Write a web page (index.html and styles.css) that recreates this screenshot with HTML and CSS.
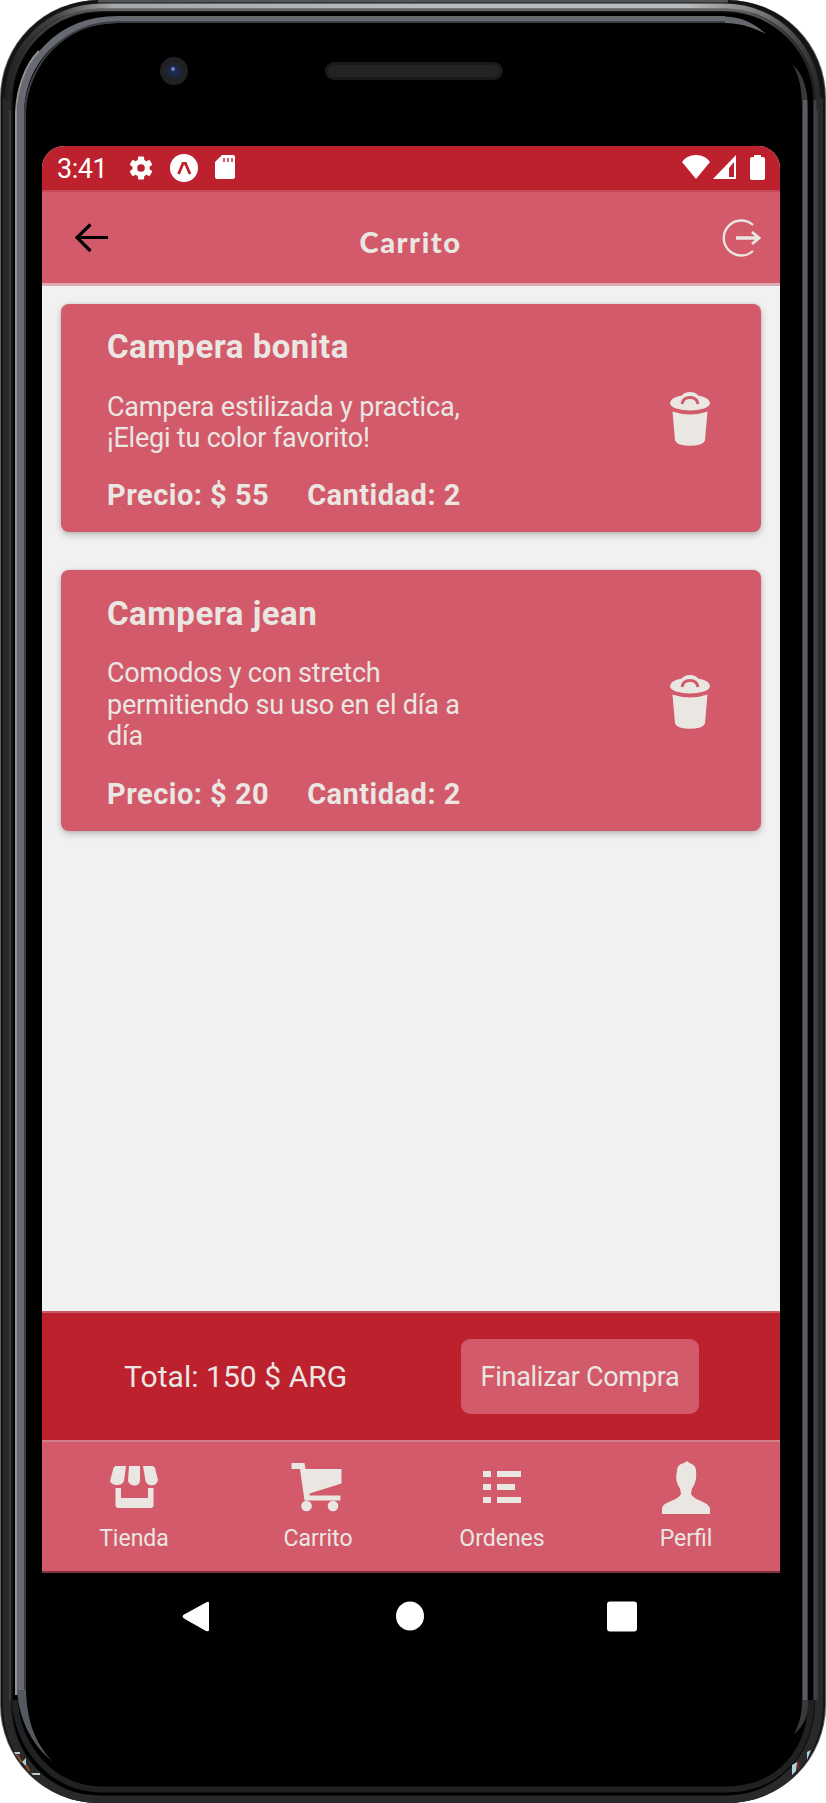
FILE: index.html
```html
<!DOCTYPE html>
<html lang="es">
<head>
<meta charset="utf-8">
<title>Carrito</title>
<link rel="stylesheet" href="styles.css">
</head>
<body>
<div class="phone">
  <svg class="frame" viewBox="0 0 826 1803" aria-hidden="true">
    <defs>
      <linearGradient id="rim" x1="0" y1="0" x2="1" y2="0">
        <stop offset="0" stop-color="#222"/><stop offset=".06" stop-color="#444"/><stop offset=".13" stop-color="#a5a8aa"/><stop offset=".5" stop-color="#b9bcbe"/>
        <stop offset=".84" stop-color="#b9bcbe"/><stop offset=".93" stop-color="#777"/><stop offset="1" stop-color="#292929"/>
      </linearGradient>
      <linearGradient id="rim2" x1="0" y1="0" x2="1" y2="0">
        <stop offset="0" stop-color="#292929"/><stop offset=".12" stop-color="#777b7e"/><stop offset=".9" stop-color="#777b7e"/><stop offset="1" stop-color="#222"/>
      </linearGradient>
    </defs>
    <rect x="0" y="0" width="826" height="1803" rx="98" fill="#606060"/>
    <rect x="1" y="0" width="824" height="1803" rx="98" fill="#141414"/>
    <path d="M98 1H728" stroke="#555" stroke-width="3" fill="none"/>
    <path d="M7 98V1705C7 1755 45 1799 98 1799H728C781 1799 819 1755 819 1705V98" fill="none" stroke="#292929" stroke-width="8"/>
    <path d="M10 110V1700M817 110V1700" stroke="#3b3b3b" stroke-width="2" fill="none"/>
    <path d="M7 100C8 46 48 6 103 6H723C777 6 817 48 818 98" fill="none" stroke="url(#rim)" stroke-width="5"/>
    <path d="M10 102C11 49 52 9.500 104 9.500H723C773 9.500 813 50 814 99" fill="none" stroke="url(#rim2)" stroke-opacity=".8" stroke-width="3"/>
    <rect x="13" y="12.500" width="800" height="1783" rx="87" fill="#000"/>
    <path d="M100 1789.500H726C779 1789 811 1752 811 1700M100 1789.500C51 1788 17 1746 15 1700" fill="none" stroke="#202122" stroke-width="6"/>
    <path d="M20.500 1695V112C22 61 60 19.500 118 19.500H725" fill="none" stroke="#676a72" stroke-width="7"/>
    <path d="M25 1695V112C27 65 64 22 118 22H725" fill="none" stroke="#3c3e44" stroke-width="2"/>
    <path d="M16 1695V112C17 89 25 65 39 51" fill="none" stroke="#929293" stroke-width="2"/>
    <path d="M120 17H725" stroke="#666" stroke-width="1"/>
    <path d="M17 1690H26C27 1720 34 1742 53 1762C30 1743 19 1718 17 1690Z" fill="#55585e"/>
    <path d="M725 16.500C743 17 755 24 766 34C752 27 739 23 725 23Z" fill="#64676e"/>
    <path d="M793 65C804 75 808 91 808 110V1705C808 1718 802 1728 794 1734C800 1723 802 1712 802 1700V110C802 91 800 78 793 65Z" fill="#37393c"/>
    <path d="M805 100V1700" stroke="#5a5c61" stroke-width="4"/>
    <path d="M815 100V1700" stroke="#404040" stroke-width="3"/>
    <path d="M14 1752h6v2h-4l4 7zM22 1762l4-4v6l4 7zM31 1773h9v2h-7z" fill="#b9cbd0"/>
    <path d="M18 1755l3 7M26 1765l3 6" stroke="#994719" stroke-width="2"/>
    <path d="M807 1752l4-2-4 10zM792 1765l5-3-1 9-4 4z" fill="#acd6de"/>
    <path d="M798 1762v7" stroke="#862425" stroke-width="2"/>
    <circle cx="174" cy="71" r="14" fill="#202124"/>
    <circle cx="174" cy="71" r="9" fill="#22242c"/>
    <circle cx="174" cy="71" r="6" fill="#1b294f"/>
    <circle cx="173" cy="69" r="2" fill="#6c85b4"/>
    <rect x="325" y="62" width="178" height="18" rx="9" fill="#1a1a1a"/>
    <rect x="328" y="65" width="172" height="12" rx="6" fill="#232323"/>
  </svg>

  <main class="screen">
    <div class="status">
      <span class="clock">3:41</span>
      <svg class="gear" viewBox="2.500 2 19 20" fill="#fff"><path fill-rule="evenodd" d="M19.140 12.940a7 7 0 0 0 0-1.880l2.030-1.580a.5.500 0 0 0 .12-.61l-1.920-3.320a.5.500 0 0 0-.59-.22l-2.390.96a7 7 0 0 0-1.620-.94L14.400 2.810A.5.500 0 0 0 13.920 2.400h-3.840a.5.500 0 0 0-.47.41L9.250 5.350a7 7 0 0 0-1.620.94l-2.390-.96a.5.500 0 0 0-.59.22L2.740 8.870a.5.500 0 0 0 .12.610l2.030 1.580a7 7 0 0 0 0 1.880l-2.030 1.580a.5.500 0 0 0-.12.610l1.920 3.320a.5.500 0 0 0 .59.220l2.390-.96a7 7 0 0 0 1.620.94l.36 2.540a.5.500 0 0 0 .48.410h3.840a.5.500 0 0 0 .47-.41l.36-2.540a7 7 0 0 0 1.620-.94l2.390.96a.5.500 0 0 0 .59-.22l1.920-3.320a.5.500 0 0 0-.12-.61zM12 15.200a3.200 3.200 0 1 1 0-6.400 3.200 3.200 0 0 1 0 6.400z"/></svg>
      <svg class="expo" viewBox="0 0 28 28"><circle cx="14" cy="14" r="14" fill="#fff"/><path d="M8.500 20L13 9.500H15.500L20 20" fill="none" stroke="#bf222e" stroke-width="2.800"/></svg>
      <svg class="sd" viewBox="0 0 20 24"><path d="M7 0h11a2 2 0 0 1 2 2v20a2 2 0 0 1-2 2H2a2 2 0 0 1-2-2V7z" fill="#fff"/><path d="M9 3v4M13 3v4M17 3v4" stroke="#d4606b" stroke-width="2"/></svg>
      <span class="grow"></span>
      <svg class="wifi" viewBox="0 0 28 24"><path d="M0 7Q5 0 14 0T28 7L14 24z" fill="#fff"/></svg>
      <svg class="signal" viewBox="0 0 23 24"><path fill-rule="evenodd" d="M23 0V24H0zM21 7L16 13V22H21z" fill="#fff"/></svg>
      <svg class="battery" viewBox="0 0 15 25"><path d="M4 0h7v2h2a2 2 0 0 1 2 2v19a2 2 0 0 1-2 2H2a2 2 0 0 1-2-2V4a2 2 0 0 1 2-2h2z" fill="#fff"/></svg>
    </div>

    <header class="header">
      <svg class="back" viewBox="0 0 34 30"><path d="M15.500 1.500L2 14.500l13.500 13.500M2 14.500H33" fill="none" stroke="#000" stroke-width="3.200"/></svg>
      <h1>Carrito</h1>
      <svg class="logout" viewBox="0 0 40 38" fill="none" stroke="#eae7e2"><path d="M32 6A17.500 17.500 0 1 0 32 32" stroke-width="2.300"/><path d="M15 19H36" stroke-width="3.500"/><path d="M31 13l7 6-7 6" stroke-width="2.800"/></svg>
    </header>

    <section class="list">
      <article class="card">
        <div class="info">
          <h2>Campera bonita</h2>
          <p>Campera estilizada y practica,<br>¡Elegi tu color favorito!</p>
          <div class="meta"><span>Precio: $ 55</span><span>Cantidad: 2</span></div>
        </div>
        <svg class="trash" viewBox="0 0 40 54"><use href="#trash"/></svg>
      </article>
      <article class="card">
        <div class="info">
          <h2>Campera jean</h2>
          <p>Comodos y con stretch<br>permitiendo su uso en el día a<br>día</p>
          <div class="meta"><span>Precio: $ 20</span><span>Cantidad: 2</span></div>
        </div>
        <svg class="trash" viewBox="0 0 40 54"><g id="trash"><path d="M2.500 19.500Q20 25.500 37.500 19.500L35 48.500Q34 51 30 52.500Q20 55 10 52.500Q6 51 5 48.500z" fill="#eae7e2"/><path d="M12 3.500Q14 0 20 0T28 3.500Q40 5.500 40 11Q40 14 34 16.500Q20 20.500 6 16.500Q0 14 0 11Q0 5.500 12 3.500z" fill="#eae7e2"/><path d="M12 12Q13 5.500 20 5.500T28 12" fill="none" stroke="#d25a6a" stroke-width="3"/></g></svg>
      </article>
    </section>

    <section class="total">
      <span class="sum">Total: 150 $ ARG</span>
      <button class="buy">Finalizar Compra</button>
    </section>

    <nav class="tabs">
      <a class="tab"><svg viewBox="0 0 54 54" fill="#eae7e2"><path d="M9 6H19L17 21Q15 25.500 9 25Q4 24 3 21L6.500 8Q7.500 6 9 6zM22 6H33V21Q32 25.500 27.500 25.500T21 21zM36 6H45Q47 6 48 8L51 20Q50 25 44.500 25.500Q40 25 38.500 21zM8.500 28H14V38H41V28H46.500V45Q46.500 48 43.500 48H11.500Q8.500 48 8.500 45z"/></svg><span>Tienda</span></a>
      <a class="tab"><svg viewBox="1.500 0 54 54" fill="#eae7e2"><path d="M2 3H15L16 9H52V23.500L20 33.500V35.500H51V40.500H15L10.500 9H2z"/><circle cx="17" cy="46" r="5.300"/><circle cx="43.500" cy="46" r="5.300"/></svg><span>Carrito</span></a>
      <a class="tab"><svg viewBox="0 0 54 54" fill="#eae7e2"><path d="M8 11H16V17H8zM22 11H46V17H22zM8 24H16V30H8zM22 24H40V30H22zM8 37H16V43H8zM22 37H46V43H22z"/></svg><span>Ordenes</span></a>
      <a class="tab"><svg viewBox="0 0 54 54" fill="#eae7e2"><path d="M28 1Q31 4 33 4Q37 6 37 11Q38 19 35 25Q32 29 32 34Q34 38 42 41Q51 45 51 49V54H3V49Q3 44 12 41Q20 38 22 34Q22 29 19 25Q16 19 18 11Q18 4 25 3z"/></svg><span>Perfil</span></a>
    </nav>
  </main>

  <div class="navkeys">
    <svg viewBox="0 0 28 31"><path d="M0.500 15.500Q1 14 2 13.500L24 1.500Q27 0 27 2V29Q27 31 24 30L2 17.500Q1 17 .5 15.500z" fill="#fff"/></svg>
    <svg class="home" viewBox="0 0 28 31"><ellipse cx="14" cy="15" rx="14" ry="14.500" fill="#fff"/></svg>
    <svg viewBox="0 0 30 31"><rect y=".5" width="30" height="30" rx="3" fill="#fff"/></svg>
  </div>
</div>
</body>
</html>
```

FILE: styles.css
```css
* { box-sizing: border-box; }

body {
  margin: 0;
  background: #fff;
  font-family: Roboto, "Liberation Sans", sans-serif;
  color: #eae7e2;
}

h1, h2, p { margin: 0; }
svg { display: block; flex: none; }

.phone {
  position: relative;
  width: 826px;
  height: 1803px;
  padding: 146px 46px 0 42px;
  overflow: hidden;
}

.frame {
  position: absolute;
  inset: 0;
  width: 826px;
  height: 1803px;
}

.screen {
  position: relative;
  display: flex;
  flex-direction: column;
  height: 1427px;
  background: #f1f1f1;
  border-radius: 22px 22px 0 0;
  overflow: hidden;
}

.status {
  display: flex;
  height: 44px;
  padding: 0 15px;
  background: #bd212d;
}

.clock {
  width: 50px;
  margin: 6px 22px 0 0;
  color: #fff;
  font-size: 27px;
  line-height: 34px;
  letter-spacing: -0.5px;
}

.gear { width: 24px; height: 24px; margin-top: 10px; }
.expo { width: 28px; height: 28px; margin: 8px 0 0 17px; }
.sd { width: 20px; height: 24px; margin: 9px 0 0 17px; }
.grow { flex: 1; }
.wifi { width: 28px; height: 24px; margin: 9px 3px 0 0; }
.signal { width: 23px; height: 24px; margin: 9px 14px 0 0; }
.battery { width: 15px; height: 25px; margin-top: 9px; }

.header {
  display: flex;
  justify-content: space-between;
  height: 96px;
  padding: 0 19px 0 33px;
  background: #d25a6a;
  border-top: 2px solid #c74a5a;
  border-bottom: 3px solid #dfabb2;
}

.header h1 {
  margin: 30px 9px 0 0;
  font: 900 29px/40px Lato, sans-serif;
  letter-spacing: 1.600px;
}

.back { width: 34px; height: 30px; margin-top: 31px; }
.logout { width: 40px; height: 38px; margin-top: 27px; }

.list {
  display: flex;
  flex: 1;
  flex-direction: column;
  gap: 38px;
  padding: 17.500px 19px;
}

.card {
  display: flex;
  align-items: flex-start;
  justify-content: space-between;
  padding: 24.500px 51px 19px 46px;
  background: #d25a6a;
  border-radius: 8px;
  box-shadow: 0 3px 7px rgb(0 0 0 / 22%), 0 0 3px rgb(0 0 0 / 12%);
}

.card h2 {
  font-size: 33px;
  font-weight: 700;
  line-height: 38px;
  letter-spacing: 0.500px;
}

.card p {
  margin-top: 25.500px;
  font-size: 27px;
  line-height: 31.400px;
  letter-spacing: -0.200px;
}

.meta {
  display: flex;
  gap: 38px;
  margin-top: 23px;
  font-size: 29px;
  font-weight: 700;
  line-height: 36px;
  letter-spacing: 0.480px;
}

.trash { align-self: center; width: 40px; height: 54px; margin-bottom: 3px; }

.total {
  display: flex;
  align-items: center;
  justify-content: space-between;
  height: 129px;
  padding: 0 81px 0 82px;
  background: #bd212d;
  border-top: 2px solid #cb5965;
}

.sum { font-size: 30px; letter-spacing: 0.050px; }

.buy {
  width: 238px;
  height: 75px;
  padding: 0;
  border: 0;
  border-radius: 9px;
  background: #d25a6a;
  color: inherit;
  font: 27px Roboto, sans-serif;
  letter-spacing: -0.280px;
}

.tabs {
  display: grid;
  grid-template-columns: repeat(4, 1fr);
  height: 133px;
  padding-right: 2px;
  background: #d25a6a;
  border-top: 2px solid #d1808b;
  border-bottom: 2px solid #7e3540;
}

.tab {
  display: flex;
  flex-direction: column;
  align-items: center;
  padding-top: 18px;
  font-size: 23px;
  line-height: 28px;
}

.tab svg { width: 54px; height: 54px; margin-bottom: 11px; }

.navkeys {
  position: relative;
  display: flex;
  justify-content: space-between;
  padding: 28px 143px 0 140px;
}

.navkeys svg { height: 31px; }
.navkeys .home { margin-left: 3px; }
```
